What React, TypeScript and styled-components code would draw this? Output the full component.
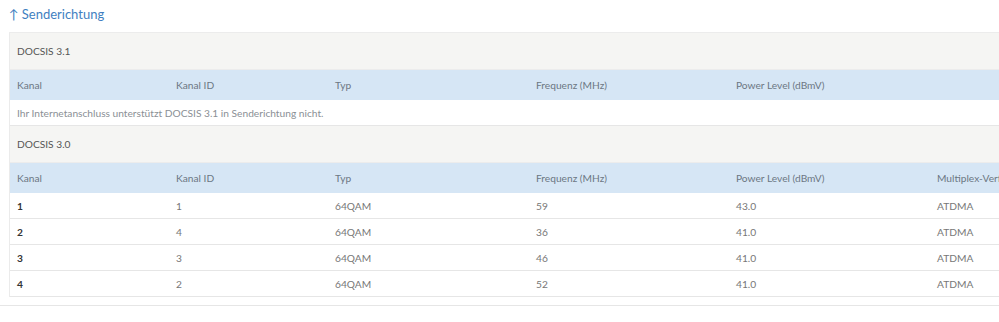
import React from "react";
import styled, { createGlobalStyle } from "styled-components";

const Global = createGlobalStyle`
  html, body { margin: 0; padding: 0; background: #fff; overflow: hidden; }
  body { font-family: "Lato", "Liberation Sans", sans-serif; }
`;

const Page = styled.div`
  width: 999px;
  height: 322px;
  overflow: hidden;
`;

const Title = styled.h2`
  margin: 0;
  padding: 5px 0 0 9px;
  height: 32px;
  box-sizing: border-box;
  font-size: 13px;
  font-weight: 400;
  color: #3f7fc1;
  line-height: 18px;
`;

const Arrow = styled.span`
  margin-right: 3px;
`;

const Wrap = styled.div`
  margin-left: 9px;
  width: 1140px;
  border-left: 1px solid #ebebeb;
  border-top: 1px solid #ececec;
`;

const Table = styled.table`
  border-collapse: collapse;
  width: 1139px;
  table-layout: fixed;
  font-size: 10.2px;
  color: #6d6d6d;
`;

const SectionRow = styled.tr`
  background: #f5f5f3;
  border-bottom: 1px solid #ececec;
  td { height: 36px; color: #555; }
`;

const HeadRow = styled.tr`
  background: #d6e6f5;
  th {
    height: 30px;
    font-weight: 400;
    text-align: left;
    color: #6c7783;
  }
`;

const Row = styled.tr`
  border-bottom: 1px solid #e6e6e6;
  td { height: 25px; }
`;

const Cell = styled.td<{ $strong?: boolean }>`
  padding: 0 0 0 7px;
  white-space: nowrap;
  overflow: hidden;
  color: ${(p) => (p.$strong ? "#333" : "#777")};
  font-weight: ${(p) => (p.$strong ? 700 : 400)};
`;

const HCell = styled.th`
  padding: 0 0 0 7px;
  white-space: nowrap;
  overflow: hidden;
`;

const Note = styled.td`
  padding: 0 0 0 7px;
  color: #8a8f95;
  height: 25px;
  white-space: nowrap;
`;

const Rule = styled.div`
  margin-top: 8px;
  height: 1px;
  background: #e6e6e6;
  width: 100%;
`;

const widths = [159, 159, 201, 200, 201, 219];
const headers = ["Kanal", "Kanal ID", "Typ", "Frequenz (MHz)", "Power Level (dBmV)", "Multiplex-Verfahren"];
const rows = [
  ["1", "1", "64QAM", "59", "43.0", "ATDMA"],
  ["2", "4", "64QAM", "36", "41.0", "ATDMA"],
  ["3", "3", "64QAM", "46", "41.0", "ATDMA"],
  ["4", "2", "64QAM", "52", "41.0", "ATDMA"],
];

export default function App() {
  return (
    <Page>
      <Global />
      <Title>
        <Arrow>↑</Arrow>Senderichtung
      </Title>
      <Wrap>
        <Table>
          <colgroup>
            {widths.map((w, i) => (
              <col key={i} width={w} />
            ))}
          </colgroup>
          <tbody>
            <SectionRow>
              <Cell colSpan={6}>DOCSIS 3.1</Cell>
            </SectionRow>
            <HeadRow>
              {headers.slice(0, 5).map((h) => (
                <HCell key={h}>{h}</HCell>
              ))}
              <HCell />
            </HeadRow>
            <Row>
              <Note colSpan={6}>Ihr Internetanschluss unterstützt DOCSIS 3.1 in Senderichtung nicht.</Note>
            </Row>
            <SectionRow>
              <Cell colSpan={6}>DOCSIS 3.0</Cell>
            </SectionRow>
            <HeadRow>
              {headers.map((h) => (
                <HCell key={h}>{h}</HCell>
              ))}
            </HeadRow>
            {rows.map((r, i) => (
              <Row key={i}>
                {r.map((c, j) => (
                  <Cell key={j} $strong={j === 0}>
                    {c}
                  </Cell>
                ))}
              </Row>
            ))}
          </tbody>
        </Table>
      </Wrap>
      <Rule />
    </Page>
  );
}
